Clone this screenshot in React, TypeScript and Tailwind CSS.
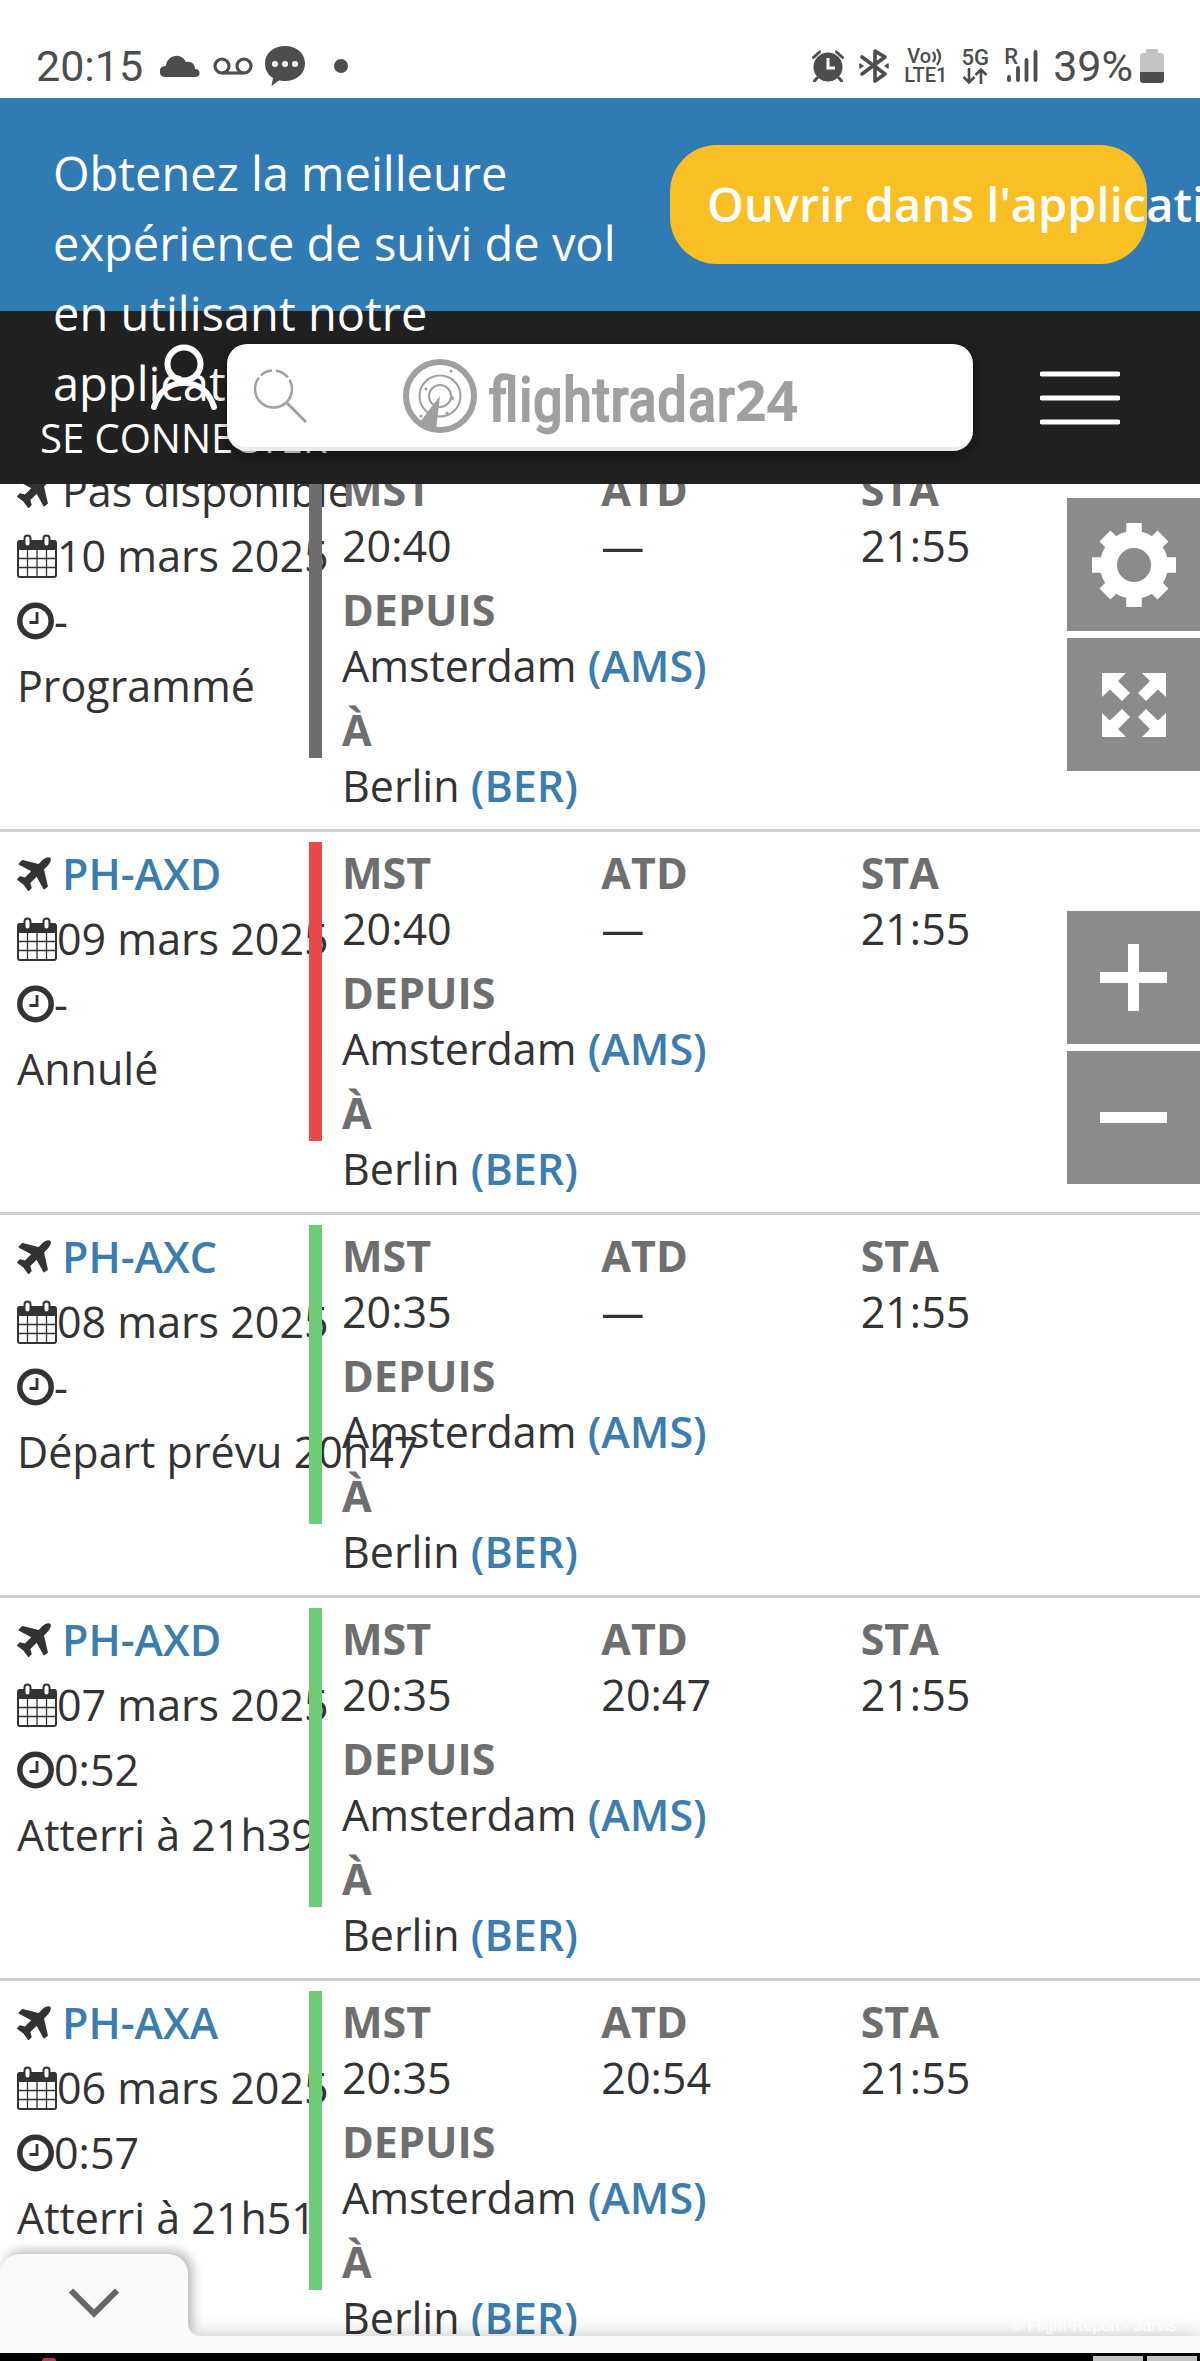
import type { ReactNode } from "react";

type Flight = {
    reg: string | null;
    date: string;
    duration: string;
    status: string;
    bar: string;
    std: string;
    atd: string;
    sta: string;
};

const flights: Flight[] = [
    { reg: null, date: "10 mars 2025", duration: "-", status: "Programmé", bar: "bg-[#6d6d6d]", std: "20:40", atd: "—", sta: "21:55" },
    { reg: "PH-AXD", date: "09 mars 2025", duration: "-", status: "Annulé", bar: "bg-[#e64a4a]", std: "20:40", atd: "—", sta: "21:55" },
    { reg: "PH-AXC", date: "08 mars 2025", duration: "-", status: "Départ prévu 20h47", bar: "bg-[#6dcb7a]", std: "20:35", atd: "—", sta: "21:55" },
    { reg: "PH-AXD", date: "07 mars 2025", duration: "0:52", status: "Atterri à 21h39", bar: "bg-[#6dcb7a]", std: "20:35", atd: "20:47", sta: "21:55" },
    { reg: "PH-AXA", date: "06 mars 2025", duration: "0:57", status: "Atterri à 21h51", bar: "bg-[#6dcb7a]", std: "20:35", atd: "20:54", sta: "21:55" },
];

function PlaneIcon() {
    return (
        <svg viewBox="192 128 1408 1408" className="w-[34px] h-[34px] shrink-0" fill="currentColor">
            <path d="M1568 160q44 52 12 148t-108 172l-161 161 160 696q5 19-12 33l-128 96q-7 6-19 6-4 0-7-1-15-3-21-16l-279-508-259 259 53 194q5 17-8 31l-96 96q-9 9-23 9h-2q-15-2-24-13l-189-252-252-189q-11-7-13-23-1-13 9-25l96-97q9-9 23-9 6 0 8 1l194 53 259-259-508-279q-14-8-17-24-2-16 9-27l128-128q14-13 30-8l665 159 160-160q76-76 172-108t148 12z" />
        </svg>
    );
}

function CalendarIcon() {
    return (
        <svg viewBox="0 0 40 44" className="w-[40px] h-[44px] shrink-0" fill="none" stroke="currentColor">
            <rect x="1" y="7" width="38" height="36" rx="2" strokeWidth="2" />
            <rect x="1" y="6" width="38" height="10" rx="2" fill="currentColor" stroke="none" />
            <path d="M1 24.500h38M1 33.500h38M10.500 15v28M20 15v28M29.500 15v28" strokeWidth="1.300" />
            <rect x="7.500" y="1.500" width="6" height="11" rx="3" fill="white" strokeWidth="2" />
            <rect x="26.500" y="1.500" width="6" height="11" rx="3" fill="white" strokeWidth="2" />
        </svg>
    );
}

function ClockIcon() {
    return (
        <svg viewBox="0 0 37 38" className="w-[37px] h-[38px] shrink-0" fill="none" stroke="currentColor">
            <circle cx="18.500" cy="19" r="15.700" strokeWidth="5.500" />
            <path d="M20 10v10.500h-7.500" strokeWidth="2.800" />
        </svg>
    );
}

function StatusBar() {
    return (
        <div className="h-[98px] shrink-0 pt-[34px] pl-[36px] pr-[36px] flex items-center bg-white text-[#4d4d4d] font-['Roboto',sans-serif]">
            <span className="text-[43px] leading-[64px]">20:15</span>
            <svg viewBox="0 0 40 24" className="ml-[17px] w-[40px] h-[24px]" fill="currentColor">
                <path d="M5 23a5 5 0 0 1 0-11c1 0 1-.5 1-1a10.500 10.500 0 0 1 20-3c5-1.500 9 2 9 7a4 4 0 0 1 1 8z" />
            </svg>
            <svg viewBox="0 0 40 18" className="ml-[13px] w-[40px] h-[18px]" fill="none" stroke="currentColor" strokeWidth="3.200">
                <circle cx="9" cy="9" r="7" />
                <circle cx="31" cy="9" r="7" />
                <path d="M9 16h22" />
            </svg>
            <svg viewBox="0 0 40 40" className="ml-[12px] w-[40px] h-[40px]">
                <path d="M20 0c11 0 20 7 20 17.500S31 35 20 35c-3 0-5-.5-6-.5L6.500 40l1.500-8C3 29 0 24 0 17.500 0 7 9 0 20 0z" fill="currentColor" />
                <g fill="white">
                    <circle cx="10" cy="18" r="3" />
                    <circle cx="20" cy="18" r="3" />
                    <circle cx="30" cy="18" r="3" />
                </g>
            </svg>
            <span className="ml-[29px] size-[14px] rounded-full bg-[#4d4d4d]" />

            <div className="ml-auto flex items-center gap-[15px]">
                <svg viewBox="0 0 32 32" className="w-[32px] h-[32px]" stroke="currentColor">
                    <circle cx="16" cy="17" r="14.500" fill="currentColor" stroke="none" />
                    <path d="M1.500 7.500 7.500 2M30.500 7.500l-6-5.500M5 28l-2.500 3M27 28l2.500 3" strokeWidth="3" strokeLinecap="round" />
                    <path d="M16 8v10h7" fill="none" stroke="white" strokeWidth="3" />
                </svg>
                <svg viewBox="0 0 30 36" className="w-[30px] h-[36px]" fill="none" stroke="currentColor" strokeWidth="3.600" strokeLinejoin="round" strokeLinecap="round">
                    <path d="m3 9 23 17-10 7V3l10 6L3 26" />
                    <path d="m1 16 3 2-3 2zM29 16l-3 2 3 2z" strokeWidth="1.500" fill="currentColor" />
                </svg>
                <div className="w-[42px] flex flex-col text-[20px] leading-[19px] font-medium whitespace-nowrap">
                    <span className="pl-[3px] flex items-center">
                        Vo
                        <svg viewBox="0 0 12 18" className="w-[12px] h-[18px]" fill="none" stroke="currentColor" strokeWidth="2.300">
                            <path d="M2 4q4 5 0 10M6 1q6 8 0 16" />
                        </svg>
                    </span>
                    <span>LTE1</span>
                </div>
                <div className="w-[28px] flex flex-col items-center text-[22px] leading-[19px] font-medium">
                    <span>5G</span>
                    <svg viewBox="0 0 26 18" className="w-[26px] h-[18px]" fill="none" stroke="currentColor" strokeWidth="2.600">
                        <path d="M7 1v14M1.500 10 7 15.500 12.500 10M19 17V3M13.500 8 19 2.500 24.500 8" />
                    </svg>
                </div>
                <div className="relative w-[34px] h-[36px]">
                    <span className="absolute left-0 top-0 text-[22px] leading-[18px] font-medium">R</span>
                    <svg viewBox="0 0 34 36" className="w-[34px] h-[36px]" fill="none" stroke="currentColor" strokeWidth="3.800" strokeLinecap="round">
                        <path d="M5 29v3M14 20v12M22.500 12v20M31.500 4v28" />
                    </svg>
                </div>
                <span className="text-[43px] leading-[64px]">39%</span>
                <svg viewBox="0 0 24 36" className="-ml-[8px] w-[24px] h-[36px]">
                    <path d="M6 1h12v4h2q4 0 4 4v15H0V9q0-4 4-4h2z" fill="#c3c3c3" />
                    <path d="M0 24h24v8q0 3-3 3H3q-3 0-3-3z" fill="currentColor" />
                </svg>
            </div>
        </div>
    );
}

function AppBanner() {
    return (
        <div className="h-[213px] shrink-0 bg-[#317bb5] flex justify-between items-start">
            <p className="relative z-10 ml-[53px] w-[575px] shrink-0 pt-[40px] text-[47px] leading-[70px] text-white">
                Obtenez la meilleure expérience de suivi de vol en utilisant notre application
            </p>
            <button className="mt-[47px] mr-[53px] w-[477px] h-[119px] shrink-0 rounded-[47px] bg-[#f8c024] pl-[37px] text-left text-[47px] font-semibold text-white whitespace-nowrap">
                Ouvrir dans l'application
            </button>
        </div>
    );
}

function Logo() {
    return (
        <a href="#" aria-label="flightradar24" className="flex items-center text-[#a0a09f]">
            <svg viewBox="0 0 74 74" className="w-[74px] h-[74px]" fill="none" stroke="currentColor">
                <circle cx="37" cy="37" r="34" strokeWidth="6" />
                <circle cx="37" cy="37" r="20.500" strokeWidth="2" />
                <circle cx="37" cy="37" r="11" strokeWidth="2" />
                <path d="M37 37 33 71 16 64z" fill="currentColor" stroke="none" />
                <g fill="currentColor" stroke="none">
                    <circle cx="48" cy="12" r="1.500" />
                    <circle cx="23" cy="30" r="1.500" />
                    <circle cx="49" cy="39" r="2" />
                    <circle cx="18" cy="57" r="1.500" />
                    <circle cx="44" cy="54" r="1.500" />
                </g>
            </svg>
            <span className="ml-[11px] pt-[8px] flex items-baseline leading-[74px]">
                <span className="text-[61px] [-webkit-text-stroke:2px_#a0a09f] font-['Liberation_Sans_Narrow','Roboto_Condensed','DejaVu_Sans_Condensed',sans-serif]">flightradar</span>
                <span className="text-[55px] font-bold">24</span>
            </span>
        </a>
    );
}

function Header() {
    return (
        <header className="h-[173px] shrink-0 pt-[33px] bg-[#212121] flex items-start">
            <div className="w-[227px] shrink-0 pl-[40px]">
                <a href="#" className="w-max flex flex-col items-center text-white">
                    <svg viewBox="0 0 68 68" className="w-[68px] h-[68px]" fill="none" stroke="currentColor" strokeWidth="6" strokeLinecap="round">
                        <circle cx="34" cy="20" r="16.500" />
                        <path d="M4 63C9 47 20 39 34 39s25 8 30 24" />
                    </svg>
                    <span className="text-[40px] leading-[52px]">SE CONNECTER</span>
                </a>
            </div>
            <label className="relative z-20 flex-1 min-w-0 h-[107px] pl-[26px] rounded-[20px] bg-white border-b-4 border-[#ececec] shadow-[0_4px_16px_rgba(0,0,0,0.5)] flex items-center">
                <svg viewBox="0 0 54 54" className="w-[54px] h-[54px] shrink-0" fill="none" stroke="#a0a09f" strokeWidth="2.500">
                    <circle cx="20.500" cy="20" r="18.500" strokeDasharray="70 3 12 4 14 3" />
                    <path d="m34 34 19 19" strokeWidth="3" />
                </svg>
                <span className="ml-[96px] shrink-0">
                    <Logo />
                </span>
                <input type="text" aria-label="Rechercher" className="min-w-0 flex-1 h-full bg-transparent outline-none text-[43px]" />
            </label>
            <div className="w-[227px] shrink-0 pl-[67px] pt-[27px]">
                <button aria-label="Menu" className="block">
                    <svg viewBox="0 0 80 54" className="w-[80px] h-[54px]" stroke="white" strokeWidth="5" strokeLinecap="round">
                        <path d="M2 3h76M2 27h76M2 51h76" />
                    </svg>
                </button>
            </div>
        </header>
    );
}

function Field({ label, children }: { label: string; children: ReactNode }) {
    return (
        <div>
            <dt className="font-bold text-[#6e6e6e]">{label}</dt>
            <dd className="whitespace-nowrap">{children}</dd>
        </div>
    );
}

function FlightRow({ flight }: { flight: Flight }) {
    return (
        <li className="h-[383px] flex items-start border-b-3 border-[#cfcfcf] text-[43px] text-[#333333]">
            <div className="w-[309px] shrink-0 pl-[17px] pt-[9px] leading-[65px] whitespace-nowrap">
                <div className="flex items-center gap-[11px]">
                    <PlaneIcon />
                    {flight.reg ? (
                        <a href="#" className="font-semibold text-[#3a7dae]">{flight.reg}</a>
                    ) : (
                        <span>Pas disponible</span>
                    )}
                </div>
                <div className="flex items-center">
                    <CalendarIcon />
                    <span>{flight.date}</span>
                </div>
                <div className="flex items-center">
                    <ClockIcon />
                    <span>{flight.duration}</span>
                </div>
                <div>{flight.status}</div>
            </div>
            <div className={`relative z-10 mt-[10px] w-[13px] h-[299px] shrink-0 ${flight.bar}`} />
            <dl className="flex-1 pl-[20px] pr-[80px] pt-[13px] leading-[56px] flex flex-col gap-[8px]">
                <div className="grid grid-cols-3">
                    <Field label="MST">{flight.std}</Field>
                    <Field label="ATD">{flight.atd}</Field>
                    <Field label="STA">{flight.sta}</Field>
                </div>
                <Field label="DEPUIS">
                    Amsterdam <a href="#" className="font-semibold text-[#3a7dae]">(AMS)</a>
                </Field>
                <Field label="À">
                    Berlin <a href="#" className="font-semibold text-[#3a7dae]">(BER)</a>
                </Field>
            </dl>
        </li>
    );
}

function MapButton({ label, children }: { label: string; children: ReactNode }) {
    return (
        <button aria-label={label} className="size-[133px] bg-[#8b8b8b] flex items-center justify-center">
            {children}
        </button>
    );
}

function MapControls() {
    return (
        <div className="absolute right-0 top-[14px] z-20 flex flex-col gap-[140px]">
            <div className="flex flex-col gap-[7px]">
                <MapButton label="Paramètres">
                    <svg viewBox="-42 -42 84 84" className="w-[84px] h-[84px]" fill="none" stroke="white">
                        <circle r="25.500" strokeWidth="17" />
                        <path d="M0-42v16M0 42V26M-42 0h16M42 0H26M-29-29l11 11M29 29 18 18M-29 29l11-11M29-29 18-18" strokeWidth="15.500" />
                    </svg>
                </MapButton>
                <MapButton label="Plein écran">
                    <svg viewBox="0 0 64 64" className="w-[64px] h-[64px]" fill="white">
                        <path d="M0 0h24l-8 8 12 12-8 8L8 16.500 0 24z" />
                        <path d="M64 0H40l8 8-12 12 8 8 12-11.500 8 7.500z" />
                        <path d="M0 64h24l-8-8 12-12-8-8L8 47.500 0 40z" />
                        <path d="M64 64H40l8-8-12-12 8-8 12 11.500 8-7.500z" />
                    </svg>
                </MapButton>
            </div>
            <div className="flex flex-col gap-[7px]">
                <MapButton label="Zoom avant">
                    <svg viewBox="0 0 67 67" className="w-[67px] h-[67px]" fill="white">
                        <path d="M28 0h11v28h28v11H39v28H28V39H0V28h28z" />
                    </svg>
                </MapButton>
                <MapButton label="Zoom arrière">
                    <svg viewBox="0 0 67 67" className="w-[67px] h-[67px]" fill="white">
                        <path d="M0 28h67v11H0z" />
                    </svg>
                </MapButton>
            </div>
        </div>
    );
}

function BottomSheet() {
    return (
        <footer className="relative z-20 shrink-0 bg-[#fafafa] shadow-[0_0_20px_rgba(0,0,0,0.25)]">
            <button aria-label="Réduire" className="absolute left-0 bottom-full w-[188px] h-[82px] pt-[16px] flex items-center justify-center rounded-t-[20px] bg-[#fafafa] shadow-[4px_-3px_12px_rgba(0,0,0,0.3)] [clip-path:inset(-20px_-20px_0_0)]">
                <svg viewBox="0 0 50 30" className="w-[50px] h-[30px]" fill="none" stroke="#666666" strokeWidth="6">
                    <path d="M2 2.500 25 25.500 48 2.500" />
                </svg>
            </button>
            <svg viewBox="0 0 14 14" className="absolute left-[188px] bottom-full w-[14px] h-[14px]" fill="#fafafa">
                <path d="M0 0q0 14 14 14H0z" />
            </svg>
            <span className="absolute right-[24px] bottom-full text-[16px] leading-[20px] text-white font-['Liberation_Sans',sans-serif]">
                © Flight-Report - Jarvis
            </span>
            <div className="h-[17px]" />
            <div className="h-[8px] bg-black flex items-end justify-end gap-[4px] pr-[3px] overflow-hidden">
                <span className="mr-auto ml-[42px] w-[14px] h-[3px] rounded-t-full bg-[#a8404c]" />
                <span className="w-[50px] h-[5px] bg-[#c4c2c4]" />
                <span className="w-[50px] h-[5px] bg-[#c4c2c4]" />
            </div>
        </footer>
    );
}

export default function App() {
    return (
        <div className="h-screen flex flex-col overflow-hidden bg-white font-['Open_Sans','Noto_Sans',sans-serif]">
            <StatusBar />
            <AppBanner />
            <Header />
            <main className="relative flex-1 min-h-0 overflow-hidden">
                <ul className="-mt-[35px]">
                    {flights.map((flight) => (
                        <FlightRow key={flight.date} flight={flight} />
                    ))}
                </ul>
                <MapControls />
            </main>
            <BottomSheet />
        </div>
    );
}
